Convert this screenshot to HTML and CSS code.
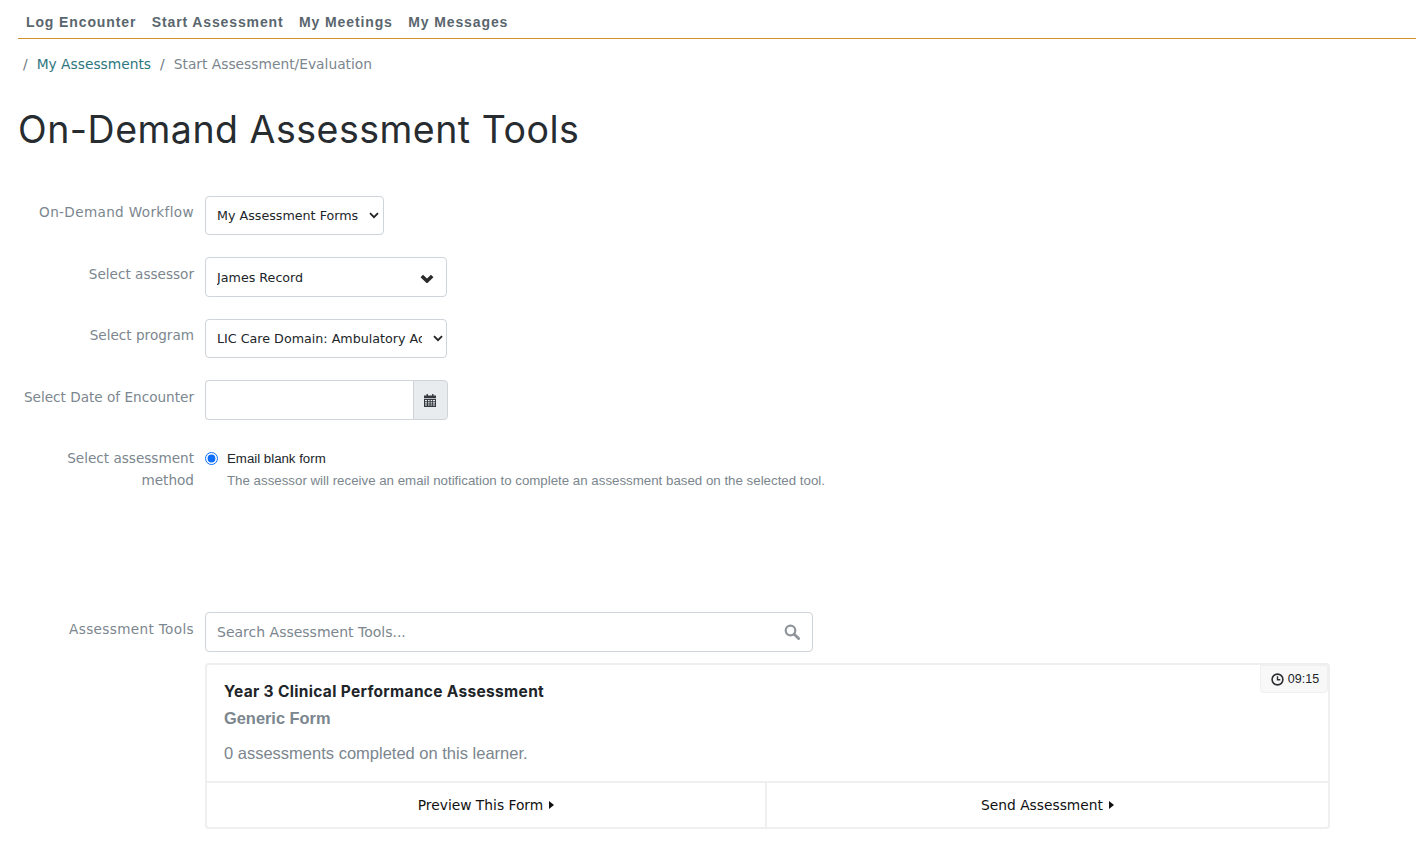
FILE: index.html
```html
<!DOCTYPE html>
<html lang="en">
<head>
<meta charset="utf-8">
<title>On-Demand Assessment Tools</title>
<link rel="stylesheet" href="styles.css">
</head>
<body>
<nav class="topnav">
  <a class="nav-link">Log Encounter</a>
  <a class="nav-link">Start Assessment</a>
  <a class="nav-link">My Meetings</a>
  <a class="nav-link">My Messages</a>
</nav>
<ol class="crumbs">
  <li class="crumb-sep">/</li>
  <li><a class="crumb-link">My Assessments</a></li>
  <li class="crumb-sep">/</li>
  <li class="crumb-current">Start Assessment/Evaluation</li>
</ol>
<h1 class="title">On-Demand Assessment Tools</h1>
<form class="form">
  <div class="row row-workflow">
    <label class="label label-wide">On-Demand Workflow</label>
    <div class="select-wrap w-auto">
      <select class="select"><option>My Assessment Forms</option></select>
      <svg class="chev" width="10" height="7" viewBox="0 0 10 7"><path d="M1 1.2l4 4 4-4" fill="none" stroke="#222" stroke-width="1.8"/></svg>
    </div>
  </div>
  <div class="row row-assessor">
    <label class="label label-low">Select assessor</label>
    <div class="select-wrap w-full tall">
      <select class="select"><option>James Record</option></select>
      <svg class="chev-bold" width="14" height="10" viewBox="0 0 14 10"><path d="M1.8 3L7 8l5.2-5" fill="none" stroke="#2b2b2b" stroke-width="3.6"/></svg>
    </div>
  </div>
  <div class="row row-program">
    <label class="label">Select program</label>
    <div class="select-wrap w-full">
      <select class="select"><option>LIC Care Domain: Ambulatory Acute Care</option></select>
      <svg class="chev chev-tight" width="10" height="7" viewBox="0 0 10 7"><path d="M1 1.2l4 4 4-4" fill="none" stroke="#222" stroke-width="1.8"/></svg>
    </div>
  </div>
  <div class="row row-date">
    <label class="label label-low">Select Date of Encounter</label>
    <div class="date-group">
      <input class="date-input" type="text">
      <span class="date-addon">
        <svg class="date-icon" width="12" height="13" viewBox="0 0 12 13"><path fill="#343a40" d="M2.5 0h1.4v1.6h4.2V0h1.4v1.6H12V4H0V1.6h2.5zM0 4.8h12V13H0zM1 6v1.2h2V6zm3 0v1.2h1.6V6zm2.6 0v1.2h1.6V6zm2.4 0v1.2h2V6zM1 8.2v1.2h2V8.2zm3 0v1.2h1.6V8.2zm2.6 0v1.2h1.6V8.2zm2.4 0v1.2h2V8.2zM1 10.4v1.2h2v-1.2zm3 0v1.2h1.6v-1.2zm2.6 0v1.2h1.6v-1.2zm2.4 0v1.2h2v-1.2z"/></svg>
      </span>
    </div>
  </div>
  <div class="row row-method">
    <label class="label label-wrap">Select assessment method</label>
    <div class="method">
      <div class="radio-line">
        <input class="radio" type="radio" checked>
        <span class="radio-label">Email blank form</span>
      </div>
      <p class="method-help">The assessor will receive an email notification to complete an assessment based on the selected tool.</p>
    </div>
  </div>
  <div class="row row-tools">
    <label class="label label-low label-wide">Assessment Tools</label>
    <div class="tools">
      <div class="search">
        <input class="search-input" type="text" placeholder="Search Assessment Tools...">
        <svg class="search-icon" width="16" height="16" viewBox="0 0 16 16"><circle cx="6.5" cy="6.5" r="4.8" fill="none" stroke="#8f959a" stroke-width="2.2"/><path d="M10.2 10.2l4.4 4.4" stroke="#8f959a" stroke-width="2.8" stroke-linecap="round"/></svg>
      </div>
      <article class="card">
        <span class="timer">
          <svg width="13" height="13" viewBox="0 0 13 13"><circle cx="6.5" cy="6.5" r="5.4" fill="none" stroke="#2b2f33" stroke-width="1.6"/><path d="M6.5 3.2v3.5h2.8" fill="none" stroke="#2b2f33" stroke-width="1.4"/></svg>
          09:15
        </span>
        <div class="card-body">
          <h3 class="card-title">Year 3 Clinical Performance Assessment</h3>
          <h4 class="card-sub">Generic Form</h4>
          <p class="card-count">0 assessments completed on this learner.</p>
        </div>
        <div class="card-actions">
          <a class="card-action card-action-first">Preview This Form <svg class="caret" width="5" height="8" viewBox="0 0 5 8"><path d="M0 0l5 4-5 4z" fill="#111"/></svg></a>
          <a class="card-action">Send Assessment <svg class="caret" width="5" height="8" viewBox="0 0 5 8"><path d="M0 0l5 4-5 4z" fill="#111"/></svg></a>
        </div>
      </article>
    </div>
  </div>
</form>
</body>
</html>
```
FILE: styles.css
```css
* { box-sizing: border-box; }
html, body { margin: 0; padding: 0; background: #fff; }
body {
  font-family: "DejaVu Sans", sans-serif;
  font-size: 13px;
  color: #212529;
  height: 844px;
  overflow: hidden;
  padding-left: 18px;
}
.topnav {
  display: flex;
  height: 39px;
  border-bottom: 1px solid #cf922a;
  padding: 13px 0 0 0;
}
.nav-link {
  font-family: "Liberation Sans", sans-serif;
  font-size: 14px;
  font-weight: 700;
  letter-spacing: 0.88px;
  line-height: 18px;
  color: #5a666e;
  padding: 0 8px;
}
.nav-link + .nav-link { margin-left: -0.5px; }
.crumbs {
  list-style: none;
  margin: 0;
  padding: 16px 0 0 5px;
  display: flex;
  gap: 9px;
  height: 50px;
  line-height: 18px;
  font-size: 13.8px;
}
.crumb-sep { color: #6c757d; }
.crumb-link { color: #2e7680; }
.crumb-current { color: #7b868e; }
.title {
  margin: 15px 0 0 0;
  font-family: Inter, sans-serif;
  font-weight: 400;
  font-size: 37.5px;
  line-height: 52px;
  letter-spacing: 0.5px;
  color: #272c30;
}
.form { display: block; margin-top: 40px; }
.row { display: flex; align-items: flex-start; }
.label {
  width: 176px;
  flex: none;
  margin-right: 11px;
  text-align: right;
  color: #7b868e;
  font-size: 13.6px;
  line-height: 22px;
  padding-top: 5px;
}
.label-low { padding-top: 6px; }
.label-wide { letter-spacing: 0.35px; }
.row-workflow { height: 61px; }
.row-assessor { height: 62px; }
.row-program { height: 61px; }
.row-date { height: 67px; }
.row-method { height: 165px; }
.label-wrap { padding: 0 0 0 40px; }
.select-wrap { position: relative; height: 39px; }
.select-wrap.tall { height: 40px; }
.w-auto { width: 179px; }
.w-full { width: 242px; }
.select {
  appearance: none;
  -webkit-appearance: none;
  width: 100%;
  height: 100%;
  border: 1px solid #ced4da;
  border-radius: 4px;
  background: #fff;
  font-family: "DejaVu Sans", sans-serif;
  font-size: 12.7px;
  color: #212529;
  padding: 0 24px 0 11px;
}
.chev { position: absolute; right: 5px; top: 16px; }
.chev-tight { right: 4px; }
.chev-bold { position: absolute; right: 13px; top: 16px; }
.date-group {
  display: flex;
  width: 243px;
  height: 40px;
}
.date-input {
  width: 208px;
  height: 100%;
  border: 1px solid #ced4da;
  border-right: 0;
  border-radius: 4px 0 0 4px;
  background: #fff;
}
.date-addon {
  flex: 1;
  display: flex;
  align-items: center;
  justify-content: center;
  background: #e9ecef;
  border: 1px solid #ced4da;
  border-radius: 0 4px 4px 0;
}
.date-icon { margin-right: 2px; }
.method { padding-top: 3px; }
.radio-line { display: flex; align-items: center; height: 16px; }
.radio {
  margin: 0 9px 0 0;
  width: 13px;
  height: 13px;
  accent-color: #0d6efd;
}
.radio-label {
  font-family: "Liberation Sans", sans-serif;
  font-size: 13.25px;
  color: #212529;
}
.method-help {
  margin: 7px 0 0 22px;
  font-family: "Liberation Sans", sans-serif;
  font-size: 13.3px;
  line-height: 16px;
  color: #7b868e;
}
.tools { width: 1125px; }
.search { position: relative; width: 608px; height: 40px; }
.search-input {
  width: 100%;
  height: 100%;
  border: 1px solid #ced4da;
  border-radius: 4px;
  padding: 0 40px 0 11px;
  font-family: "DejaVu Sans", sans-serif;
  font-size: 14px;
  color: #212529;
}
.search-input::placeholder { color: #7b868e; opacity: 1; }
.search-icon { position: absolute; right: 13px; top: 12px; }
.card {
  position: relative;
  margin-top: 11px;
  height: 166px;
  border: 2px solid #eeeff0;
  border-radius: 4px;
  display: flex;
  flex-direction: column;
}
.timer {
  position: absolute;
  top: 0;
  right: 0;
  height: 28px;
  width: 68px;
  padding-left: 2px;
  display: flex;
  align-items: center;
  justify-content: center;
  gap: 4px;
  background: #f8f8f8;
  border: 1px solid #f0f0f0;
  border-radius: 0 2px 4px 4px;
  font-family: "Liberation Sans", sans-serif;
  font-size: 12.5px;
  color: #212529;
}
.card-body { flex: 1; padding: 16px 17px 0; }
.card-title {
  margin: 0;
  font-family: Inter, sans-serif;
  font-weight: 700;
  font-size: 15.5px;
  line-height: 22px;
  color: #212529;
  letter-spacing: 0.32px;
}
.card-sub {
  margin: 4px 0 0;
  font-family: "Liberation Sans", sans-serif;
  font-weight: 700;
  font-size: 16.4px;
  line-height: 22px;
  color: #7b868e;
}
.card-count {
  margin: 13px 0 0;
  font-family: "Liberation Sans", sans-serif;
  font-size: 16.5px;
  line-height: 22px;
  color: #7b868e;
}
.card-actions {
  display: flex;
  height: 46px;
  border-top: 2px solid #eeeff0;
}
.card-action {
  flex: 1;
  display: flex;
  align-items: center;
  justify-content: center;
  gap: 6px;
  font-size: 13.8px;
  color: #111;
}
.card-action-first { flex: none; width: 558px; }
.card-action + .card-action { border-left: 2px solid #eeeff0; }
```
